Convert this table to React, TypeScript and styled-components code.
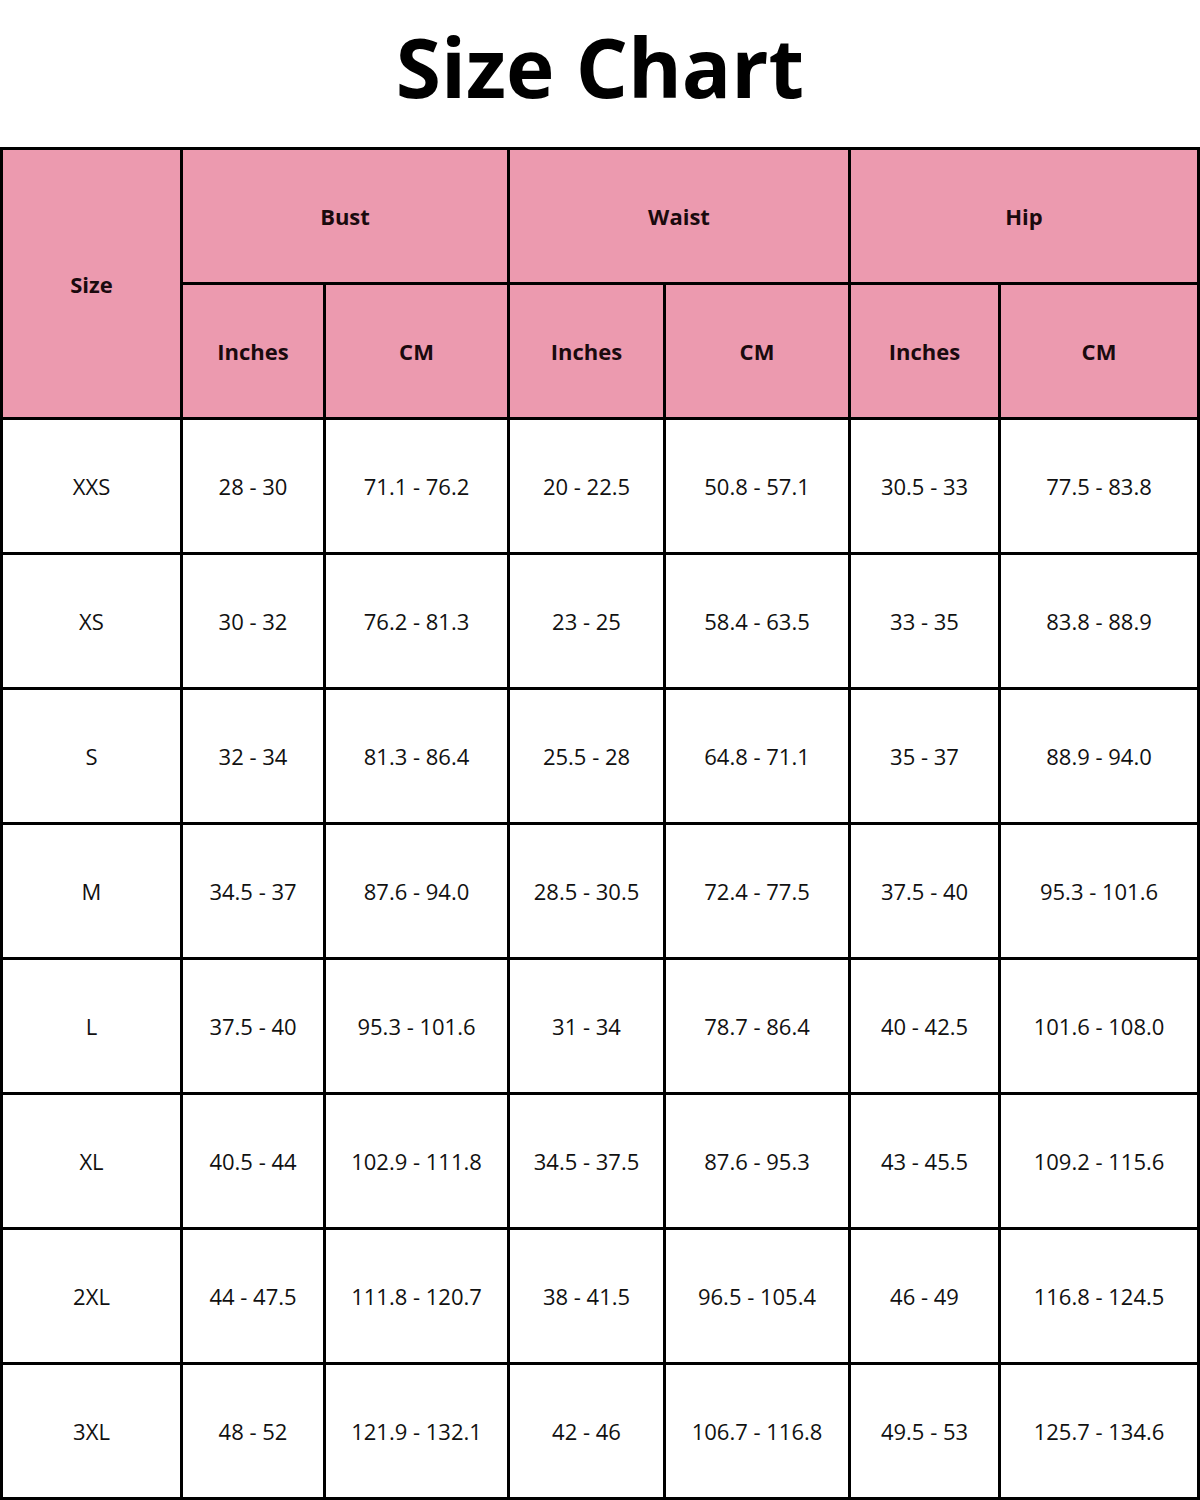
import React from "react";
import styled, { createGlobalStyle } from "styled-components";

const GlobalStyle = createGlobalStyle`
  html, body { margin: 0; padding: 0; background: #ffffff; }
  body { font-family: "Open Sans", "Liberation Sans", sans-serif; color: #000; }
`;

const Page = styled.div`
  width: 1200px;
  height: 1500px;
  display: flex;
  flex-direction: column;
  background: #fff;
`;

const TitleBar = styled.header`
  height: 147px;
  display: flex;
  align-items: center;
  justify-content: center;
`;

const Title = styled.h1`
  margin: 0;
  padding-bottom: 16px;
  font-family: "Open Sans", "Liberation Sans", sans-serif;
  font-weight: 700;
  font-size: 82px;
  letter-spacing: 0;
  line-height: 1;
  color: #000;
`;

const Grid = styled.div`
  display: grid;
  grid-template-columns: 177px 140px 181px 153px 182px 147px 196px;
  grid-auto-rows: 132px;
  gap: 3px;
  padding: 3px;
  background: #000;
`;

const HeadCell = styled.div<{ $rows?: number; $cols?: number }>`
  grid-row: span ${(p) => p.$rows ?? 1};
  grid-column: span ${(p) => p.$cols ?? 1};
  background: #ec9aaf;
  display: flex;
  align-items: center;
  justify-content: center;
  font-family: "Open Sans", "Liberation Sans", sans-serif;
  font-weight: 700;
  font-size: 22px;
  color: #1a0a0e;
`;

const Cell = styled.div`
  background: #fff;
  display: flex;
  align-items: center;
  justify-content: center;
  font-family: "Open Sans", "Liberation Sans", sans-serif;
  font-weight: 400;
  font-size: 22px;
  color: #111;
`;

const rows: string[][] = [
  ["XXS", "28 - 30", "71.1 - 76.2", "20 - 22.5", "50.8 - 57.1", "30.5 - 33", "77.5 - 83.8"],
  ["XS", "30 - 32", "76.2 - 81.3", "23 - 25", "58.4 - 63.5", "33 - 35", "83.8 - 88.9"],
  ["S", "32 - 34", "81.3 - 86.4", "25.5 - 28", "64.8 - 71.1", "35 - 37", "88.9 - 94.0"],
  ["M", "34.5 - 37", "87.6 - 94.0", "28.5 - 30.5", "72.4 - 77.5", "37.5 - 40", "95.3 - 101.6"],
  ["L", "37.5 - 40", "95.3 - 101.6", "31 - 34", "78.7 - 86.4", "40 - 42.5", "101.6 - 108.0"],
  ["XL", "40.5 - 44", "102.9 - 111.8", "34.5 - 37.5", "87.6 - 95.3", "43 - 45.5", "109.2 - 115.6"],
  ["2XL", "44 - 47.5", "111.8 - 120.7", "38 - 41.5", "96.5 - 105.4", "46 - 49", "116.8 - 124.5"],
  ["3XL", "48 - 52", "121.9 - 132.1", "42 - 46", "106.7 - 116.8", "49.5 - 53", "125.7 - 134.6"],
];

export default function App() {
  return (
    <Page>
      <GlobalStyle />
      <TitleBar>
        <Title>Size Chart</Title>
      </TitleBar>
      <Grid>
        <HeadCell $rows={2}>Size</HeadCell>
        <HeadCell $cols={2}>Bust</HeadCell>
        <HeadCell $cols={2}>Waist</HeadCell>
        <HeadCell $cols={2}>Hip</HeadCell>
        <HeadCell>Inches</HeadCell>
        <HeadCell>CM</HeadCell>
        <HeadCell>Inches</HeadCell>
        <HeadCell>CM</HeadCell>
        <HeadCell>Inches</HeadCell>
        <HeadCell>CM</HeadCell>
        {rows.map((r) =>
          r.map((v, i) => <Cell key={r[0] + i}>{v}</Cell>)
        )}
      </Grid>
    </Page>
  );
}
